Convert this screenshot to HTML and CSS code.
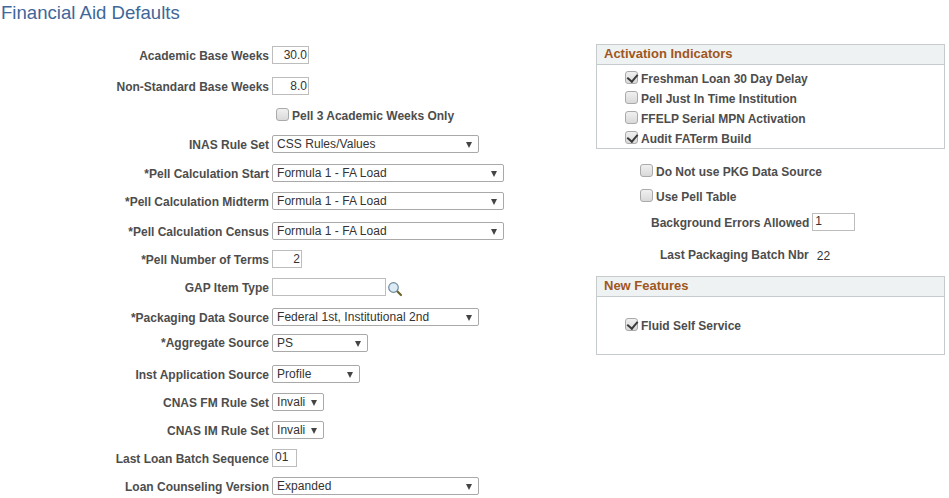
FILE: index.html
```html
<!DOCTYPE html>
<html>

<head>
  <title>Financial Aid Defaults</title>
  <meta charset="utf-8">
  <link rel="stylesheet" href="styles.css">
</head>

<body>
  <h1 class="title">Financial Aid Defaults</h1>
  <div class="page">
    <div class="left">
      <div class="row h31"><label class="lbl">Academic Base Weeks</label><span class="box num w37">30.0</span></div>
      <div class="row h30"><label class="lbl">Non-Standard Base Weeks</label><span class="box num w37">8.0</span></div>
      <div class="row h28"><span class="lbl"></span><span class="check"><i class="cb"></i>Pell 3 Academic Weeks Only</span></div>
      <div class="row h29"><label class="lbl">INAS Rule Set</label><span class="sel w207">CSS Rules/Values<b class="arrow"></b></span></div>
      <div class="row h28"><label class="lbl">*Pell Calculation Start</label><span class="sel w232">Formula 1 - FA Load<b class="arrow"></b></span></div>
      <div class="row h30"><label class="lbl">*Pell Calculation Midterm</label><span class="sel w232">Formula 1 - FA Load<b class="arrow"></b></span></div>
      <div class="row h28"><label class="lbl">*Pell Calculation Census</label><span class="sel w232">Formula 1 - FA Load<b class="arrow"></b></span></div>
      <div class="row h28"><label class="lbl">*Pell Number of Terms</label><span class="box num w30">2</span></div>
      <div class="row h30"><label class="lbl">GAP Item Type</label><span class="box w114"></span>
        <svg class="lookup" width="16" height="16" viewBox="0 0 16 16">
          <line x1="9.5" y1="9.5" x2="14" y2="14" stroke="#6b6428" stroke-width="2.2" stroke-linecap="round" />
          <circle cx="6.5" cy="6.5" r="4.8" fill="#dcebf5" stroke="#6f8a9e" stroke-width="1.2" />
        </svg>
      </div>
      <div class="row h26"><label class="lbl">*Packaging Data Source</label><span class="sel w207">Federal 1st, Institutional 2nd<b class="arrow"></b></span></div>
      <div class="row h31"><label class="lbl top0">*Aggregate Source</label><span class="sel w96">PS<b class="arrow"></b></span></div>
      <div class="row h28"><label class="lbl">Inst Application Source</label><span class="sel w88">Profile<b class="arrow"></b></span></div>
      <div class="row h28"><label class="lbl">CNAS FM Rule Set</label><span class="sel w52">Invali<b class="arrow"></b></span></div>
      <div class="row h28"><label class="lbl">CNAS IM Rule Set</label><span class="sel w52">Invali<b class="arrow"></b></span></div>
      <div class="row h28"><label class="lbl">Last Loan Batch Sequence</label><span class="box w25">01</span></div>
      <div class="row h28"><label class="lbl">Loan Counseling Version</label><span class="sel w207">Expanded<b class="arrow"></b></span></div>
    </div>

    <div class="right">
      <div class="group">
        <div class="group-head">Activation Indicators</div>
        <div class="group-body">
          <div class="check"><i class="cb on"></i>Freshman Loan 30 Day Delay</div>
          <div class="check"><i class="cb"></i>Pell Just In Time Institution</div>
          <div class="check"><i class="cb"></i>FFELP Serial MPN Activation</div>
          <div class="check"><i class="cb on"></i>Audit FATerm Build</div>
        </div>
      </div>
      <div class="extras">
        <div class="check first"><i class="cb"></i>Do Not use PKG Data Source</div>
        <div class="check"><i class="cb"></i>Use Pell Table</div>
        <div class="errors"><label class="lbl-plain">Background Errors Allowed</label><span class="box w43">1</span></div>
        <div class="batch"><label class="lbl-plain">Last Packaging Batch Nbr</label><span class="value">22</span></div>
      </div>
      <div class="group">
        <div class="group-head">New Features</div>
        <div class="group-body tall">
          <div class="check"><i class="cb on"></i>Fluid Self Service</div>
        </div>
      </div>
    </div>
  </div>
</body>

</html>
```

FILE: styles.css
```css
* {
  padding: 0;
  margin: 0;
  box-sizing: border-box;
}

body {
  width: 949px;
  height: 498px;
  overflow: hidden;
  background: #fff;
  font-family: "Liberation Sans", Arial, sans-serif;
  font-size: 12px;
  color: #333;
}

.title {
  height: 46px;
  padding: 2px 0 0 1px;
  font-size: 18.6px;
  line-height: 22px;
  font-weight: normal;
  color: #40679a;
}

.page {
  display: flex;
}

.left {
  width: 596px;
}

.right {
  width: 349px;
  margin-top: -2px;
}

.row {
  display: flex;
  align-items: flex-start;
}

.h26 { height: 26px; }
.h28 { height: 28px; }
.h29 { height: 29px; }
.h30 { height: 30px; }
.h31 { height: 31px; }

.lbl {
  width: 269px;
  margin-right: 3px;
  padding-top: 1px;
  text-align: right;
  font-weight: bold;
  line-height: 18px;
  color: #4d4d4d;
  flex-shrink: 0;
}

.lbl.top0 {
  padding-top: 0;
}

.box,
.sel {
  display: block;
  height: 18px;
  border: 1px solid #bdbdbd;
  background: #fff;
  line-height: 16px;
  color: #333;
  flex-shrink: 0;
}

.box {
  padding-left: 2px;
  line-height: 14px;
}

.num {
  text-align: right;
  padding: 0 1px 0 0;
  line-height: 16px;
}

.sel {
  position: relative;
  padding-left: 4px;
  border-color: #a9a9a9;
  border-radius: 2px;
  letter-spacing: 0.05px;
}

.arrow {
  position: absolute;
  right: 6px;
  top: 6px;
  width: 0;
  height: 0;
  border-left: 3.5px solid transparent;
  border-right: 3.5px solid transparent;
  border-top: 6px solid #444;
}

.w25 { width: 25px; }
.w30 { width: 30px; }
.w37 { width: 37px; }
.w43 { width: 43px; }
.w52 { width: 52px; }
.w88 { width: 88px; }
.w96 { width: 96px; }
.w114 { width: 114px; }
.w207 { width: 207px; }
.w232 { width: 232px; }

.lookup {
  margin: 3px 0 0 1px;
}

.check {
  display: flex;
  align-items: center;
  height: 20px;
  font-weight: bold;
  color: #4d4d4d;
}

.cb {
  position: relative;
  display: block;
  width: 13px;
  height: 13px;
  margin: -3px 3px 0 0;
  border: 1px solid #aaa;
  border-radius: 3px;
  background: linear-gradient(#f0f0f0, #d9d9d9);
}

.cb.on::after {
  content: "";
  position: absolute;
  left: 3px;
  top: 0;
  width: 5px;
  height: 8px;
  border: solid #3a3a3a;
  border-width: 0 2.5px 2.5px 0;
  transform: rotate(40deg);
}

.row .check {
  height: 18px;
  margin-left: 4px;
}

.group {
  border: 1px solid #c6cbce;
}

.group-head {
  height: 20px;
  padding-left: 7px;
  background: #eef2f3;
  border-bottom: 1px solid #c6cbce;
  font-weight: bold;
  font-size: 13px;
  line-height: 17px;
  color: #a0561c;
}

.group-body {
  height: 83px;
  padding: 4px 0 0 28px;
}

.group-body .check {
  height: 20px;
}

.group-body.tall {
  height: 57px;
  padding-top: 19px;
}

.extras {
  height: 127px;
  padding-top: 11px;
}

.extras .check {
  height: 25px;
  padding-left: 44px;
}

.extras .check.first {
  height: 24px;
}

.errors,
.batch {
  display: flex;
  align-items: flex-start;
}

.errors {
  margin-top: 4px;
  padding-left: 55px;
}

.batch {
  margin-top: 13px;
  padding-left: 64px;
}

.lbl-plain {
  margin-right: 3px;
  padding-top: 1px;
  font-weight: bold;
  line-height: 18px;
  color: #4d4d4d;
}

.value {
  margin: 1px 0 0 5px;
  line-height: 20px;
}
```
